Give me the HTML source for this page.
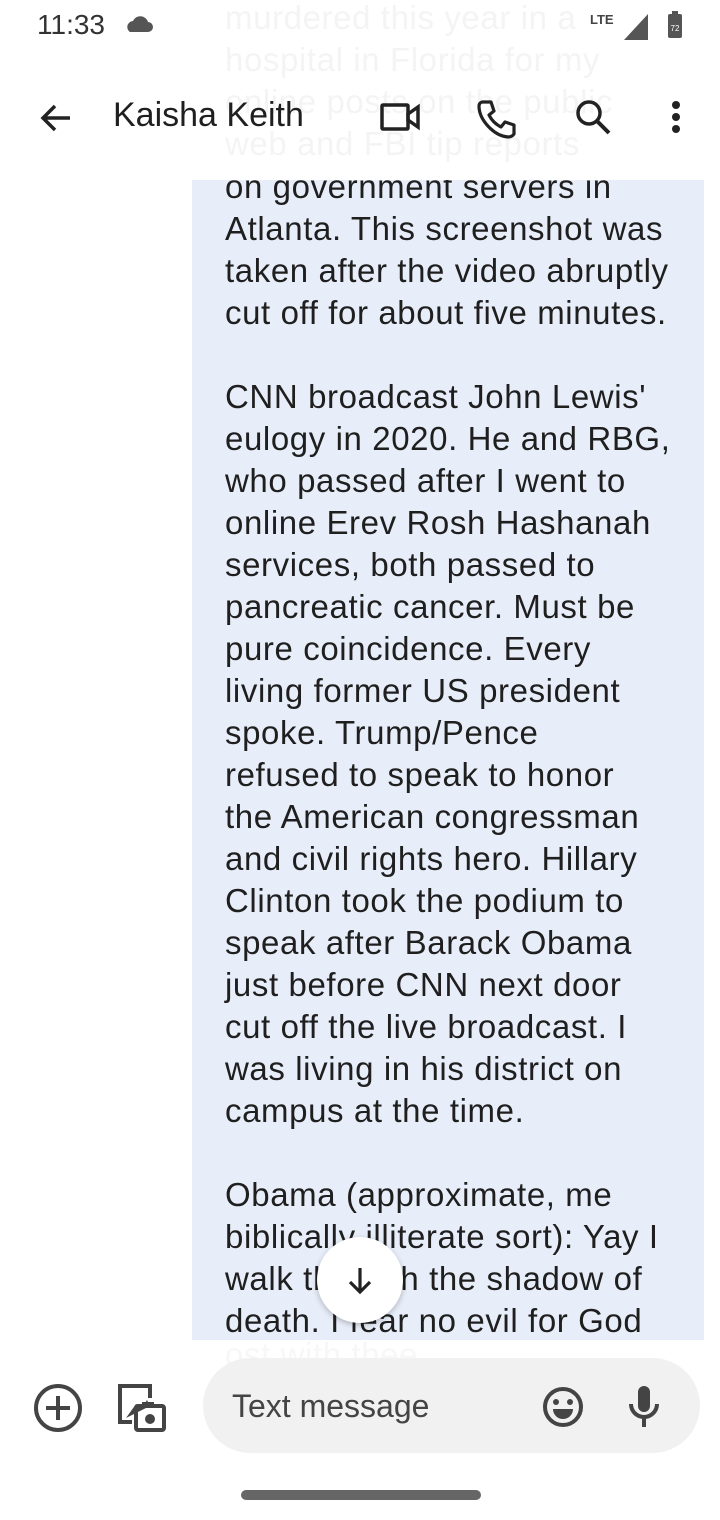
<!DOCTYPE html>
<html><head><meta charset="utf-8"><style>
*{margin:0;padding:0;box-sizing:border-box}
body{width:720px;height:1520px;background:#fff;position:relative;overflow:hidden;font-family:"Liberation Sans",sans-serif;color:#1f1f1f}
.bubble{position:absolute;left:192px;top:180px;width:512px;height:1160px;background:#e8eef9;overflow:hidden}
.txt{position:absolute;left:33px;font-size:33px;line-height:42px;white-space:pre;letter-spacing:0.6px}
.faint{position:absolute;left:225px;font-size:33px;line-height:42px;white-space:pre;color:#f4f4f4;letter-spacing:0.6px}
.abs{position:absolute}
</style></head><body>
<div class="faint" style="top:-3px">murdered this year in a
hospital in Florida for my
online posts on the public
web and FBI tip reports</div>
<div class="faint" style="top:1334px;color:#f7f7f7">ost with thee</div>
<div class="bubble"><div class="txt" style="top:-14px">on government servers in
Atlanta. This screenshot was
taken after the video abruptly
cut off for about five minutes.

CNN broadcast John Lewis'
eulogy in 2020. He and RBG,
who passed after I went to
online Erev Rosh Hashanah
services, both passed to
pancreatic cancer. Must be
pure coincidence. Every
living former US president
spoke. Trump/Pence
refused to speak to honor
the American congressman
and civil rights hero. Hillary
Clinton took the podium to
speak after Barack Obama
just before CNN next door
cut off the live broadcast. I
was living in his district on
campus at the time.

Obama (approximate, me
biblically illiterate sort): Yay I
walk through the shadow of
death. I fear no evil for God</div></div>
<div class="abs" style="left:37px;top:9px;font-size:28px;color:#333">11:33</div>
<svg class="abs" style="left:124px;top:14px" width="30" height="20" viewBox="0 0 30 20"><path d="M6 18h18a5 5 0 0 0 0-10 8 8 0 0 0-15-1A6 6 0 0 0 6 18z" fill="#555"/></svg>
<div class="abs" style="left:590px;top:12px;font-size:13px;font-weight:bold;color:#444">LTE</div>
<svg class="abs" style="left:622px;top:12px" width="28" height="30"><path d="M26 2V28H2Z" fill="#555"/></svg>
<svg class="abs" style="left:666px;top:10px" width="20" height="30"><rect x="2" y="4" width="14" height="24" rx="2" fill="#555"/><rect x="6" y="1" width="6" height="4" fill="#555"/><text x="9" y="21" font-size="8" fill="#fff" text-anchor="middle" font-family="Liberation Sans">72</text></svg>
<svg class="abs" style="left:36px;top:98px" width="40" height="40" viewBox="0 0 40 40"><path d="M34 20H8M19 8L7 20l12 12" stroke="#222" stroke-width="3.5" fill="none"/></svg>
<div class="abs" style="left:113px;top:96px;font-size:34px;color:#1f1f1f">Kaisha Keith</div>
<svg class="abs" style="left:378px;top:100px" width="46" height="36"><rect x="4" y="5" width="26" height="24" rx="1" fill="none" stroke="#222" stroke-width="3.5"/><path d="M30 14l10-7v20l-10-7z" fill="none" stroke="#222" stroke-width="3.5"/></svg>
<svg class="abs" style="left:474px;top:96px" width="44" height="44" viewBox="0 0 44 44"><path d="M8 6h9l3 9-5 4q4 8 12 12l4-5 9 3v9q-2 3-6 3C20 40 5 24 5 10q0-3 3-4z" fill="none" stroke="#222" stroke-width="3.2" stroke-linejoin="round"/></svg>
<svg class="abs" style="left:572px;top:96px" width="44" height="44"><circle cx="17" cy="17" r="11" fill="none" stroke="#222" stroke-width="3.5"/><path d="M25 25l12 12" stroke="#222" stroke-width="4"/></svg>
<svg class="abs" style="left:666px;top:98px" width="20" height="40"><circle cx="10" cy="7" r="4" fill="#222"/><circle cx="10" cy="19" r="4" fill="#222"/><circle cx="10" cy="31" r="4" fill="#222"/></svg>
<div class="abs" style="left:317px;top:1237px;width:86px;height:86px;border-radius:50%;background:#fff;box-shadow:0 2px 6px rgba(0,0,0,.25)"></div>
<svg class="abs" style="left:340px;top:1260px" width="40" height="40"><path d="M20 8v24M10 22l10 10 10-10" stroke="#222" stroke-width="3.2" fill="none"/></svg>
<svg class="abs" style="left:32px;top:1382px" width="52" height="52"><circle cx="26" cy="26" r="22" fill="none" stroke="#444" stroke-width="4"/><path d="M26 14v24M14 26h24" stroke="#444" stroke-width="4"/></svg>
<svg class="abs" style="left:116px;top:1382px" width="54" height="52"><path d="M16 40H4V4h30v12" fill="none" stroke="#444" stroke-width="4"/><path d="M10 36l10-14 6 4 5-8 3 6" fill="#444"/><rect x="20" y="24" width="28" height="24" rx="2" fill="none" stroke="#444" stroke-width="4"/><circle cx="34" cy="37" r="5" fill="#444"/><rect x="26" y="20" width="12" height="6" fill="#444"/></svg>
<div class="abs" style="left:203px;top:1358px;width:497px;height:95px;border-radius:48px;background:#f1f1f1"></div>
<div class="abs" style="left:232px;top:1388px;font-size:32px;color:#444">Text message</div>
<svg class="abs" style="left:540px;top:1384px" width="46" height="46"><circle cx="23" cy="23" r="18" fill="none" stroke="#444" stroke-width="4"/><circle cx="16" cy="18" r="3" fill="#444"/><circle cx="30" cy="18" r="3" fill="#444"/><path d="M13 25h20a10 10 0 0 1-20 0z" fill="#444"/></svg>
<svg class="abs" style="left:626px;top:1384px" width="36" height="46"><rect x="12" y="2" width="12" height="26" rx="6" fill="#444"/><path d="M5 20a13 13 0 0 0 26 0M18 33v10" stroke="#444" stroke-width="4" fill="none"/></svg>
<div class="abs" style="left:241px;top:1490px;width:240px;height:10px;border-radius:5px;background:#666"></div>
</body></html>
